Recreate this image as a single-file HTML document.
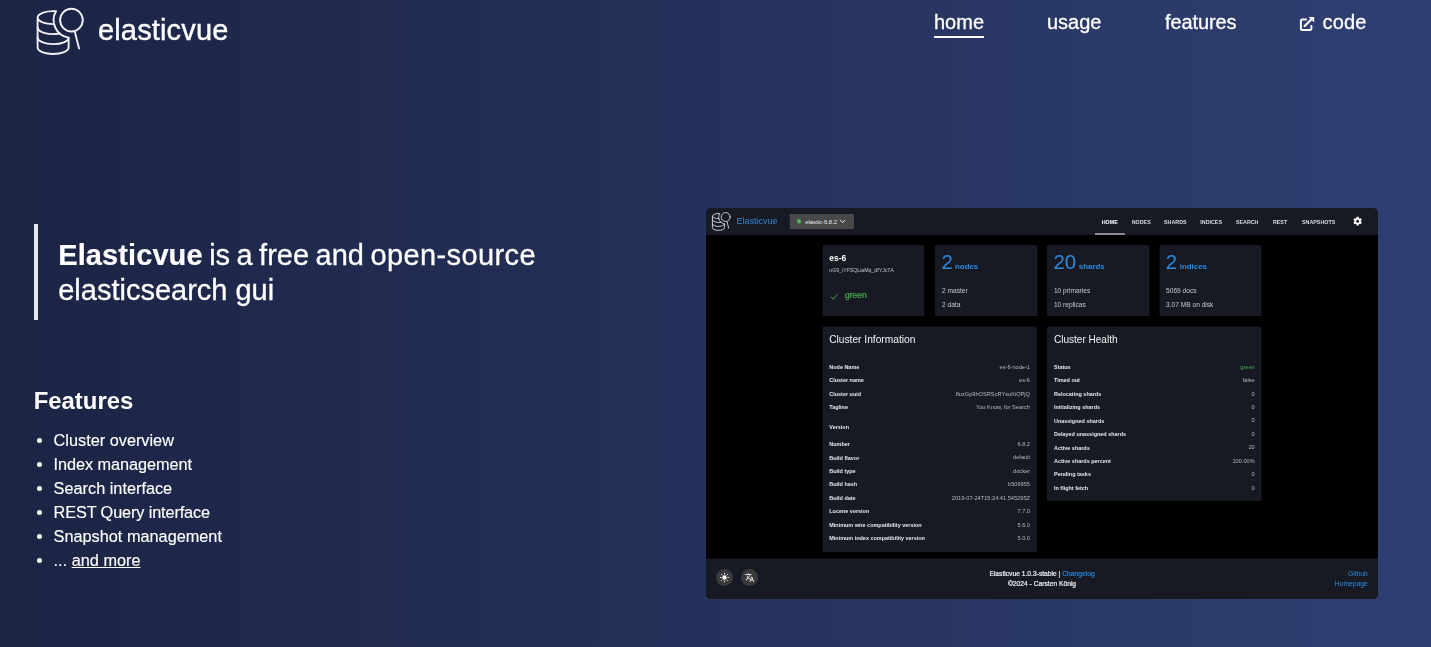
<!DOCTYPE html>
<html lang="en">
<head>
<meta charset="utf-8">
<title>elasticvue</title>
<style>
*{box-sizing:border-box;margin:0;padding:0}
html,body{width:1431px;height:647px;overflow:hidden}
body{font-family:"Liberation Sans",sans-serif;color:#fff;background:linear-gradient(90deg,#1c2444 0%,#2f3f72 100%);position:relative;-webkit-font-smoothing:antialiased}
a{color:inherit}
.abs{position:absolute}
#root{position:absolute;left:0;top:0;width:1431px;height:647px;opacity:.999}
/* ---------- header ---------- */
#logo{left:34px;top:6px;width:52px;height:52px}
#brand{left:98px;top:12px;font-size:29px;line-height:36px;letter-spacing:0.15px;white-space:nowrap;-webkit-text-stroke:0.4px #fff}
nav a{position:absolute;top:9px;font-size:20px;line-height:26px;text-decoration:none;white-space:nowrap;-webkit-text-stroke:0.3px #fff}
nav a.active{border-bottom:2px solid #fff;padding-bottom:1px}
/* ---------- hero ---------- */
#quote{left:34px;top:224px;width:560px;height:96px;border-left:4px solid #e7e8ee;padding:13.5px 0 0 20.2px;font-size:29px;line-height:35.6px;white-space:nowrap;word-spacing:-1.6px;-webkit-text-stroke:0.3px #fff}
#quote b{font-weight:700;letter-spacing:0.1px;-webkit-text-stroke:0.2px #fff}
#feat{left:33.7px;top:386.2px;font-size:23.9px;line-height:30px;font-weight:700}
#list{left:34px;top:428px;list-style:none;font-size:16.3px;line-height:24px}
#list li{position:relative;padding-left:19.6px;white-space:nowrap;-webkit-text-stroke:0.15px #fff}
#list li:before{content:"";position:absolute;left:2.9px;top:9.6px;width:5.4px;height:5.4px;border-radius:50%;background:#fff}
/* ---------- app screenshot ---------- */
#shot{left:706px;top:208px;width:672px;height:391px;border-radius:5.5px;background:#000;overflow:hidden}
#app{position:absolute;left:0;top:0;width:1344px;height:782px;transform:scale(.5);transform-origin:0 0;font-family:"Liberation Sans",sans-serif}
#app .bar{left:0;top:0;width:1344px;height:53.5px;background:#191b24}
#app .foot{left:0;top:700.8px;width:1344px;height:82px;background:#191b24}
#app .card{position:absolute;background:#191b24;border-radius:3px}
#app .t{position:absolute;line-height:1;white-space:nowrap}
</style>
</head>
<body>
<div id="root">

<!-- header -->
<svg id="logo" class="abs" viewBox="0 0 52 52" fill="none" stroke="#f1f2f7" stroke-width="1.9" stroke-linecap="round" stroke-linejoin="round">
  <path d="M3.6 11.6 A15.5 6.5 0 0 1 22 5.22 A17.8 17.8 0 0 0 34.6 31.67 V41.5 A15.5 6.5 0 0 1 3.6 41.5 V11.6 A15.5 6.5 0 0 0 20.08 18.09"/>
  <path d="M3.6 21.6 A15.5 6.5 0 0 0 25.7 27.48"/>
  <path d="M3.6 31.6 A15.5 6.5 0 0 0 34.6 31.67"/>
  <circle cx="37.43" cy="14.1" r="11.35"/>
  <path d="M40.9 26.1 L45.05 42.5"/>
</svg>
<div id="brand" class="abs">elasticvue</div>

<nav>
  <a class="active" style="left:934px">home</a>
  <a style="left:1047px">usage</a>
  <a style="left:1165px;letter-spacing:-0.1px">features</a>
  <a style="left:1322.6px;letter-spacing:0.15px">code</a>
</nav>
<svg class="abs" style="left:1299px;top:16px;width:17px;height:16px" viewBox="0 0 17 16" fill="none" stroke="#fff" stroke-width="2" stroke-linecap="round" stroke-linejoin="round">
  <path d="M7 3.5 H3.4 A1.5 1.5 0 0 0 1.9 5 V12.4 A1.5 1.5 0 0 0 3.4 13.9 H10.9 A1.5 1.5 0 0 0 12.4 12.4 V10"/>
  <path d="M5.7 10 L13 2.7" stroke-width="2.3"/>
  <path d="M9.7 1 H15.2 V6.5 Z" fill="#fff" stroke="none"/>
</svg>

<!-- hero -->
<div id="quote" class="abs"><b>Elasticvue</b> is a free and <span style="letter-spacing:0.4px">open-source</span><br><span style="word-spacing:0;letter-spacing:0">elasticsearch gui</span></div>
<div id="feat" class="abs">Features</div>
<ul id="list" class="abs">
  <li>Cluster overview</li>
  <li style="letter-spacing:-0.07px">Index management</li>
  <li>Search interface</li>
  <li style="letter-spacing:-0.13px">REST Query interface</li>
  <li>Snapshot management</li>
  <li>... <a href="#features" style="text-decoration:underline">and more</a></li>
</ul>

<!-- app screenshot -->
<div id="shot" class="abs">
<div id="app">
  <div class="bar abs"></div>
  <div class="foot abs"></div>
  <svg class="abs" style="left:10.4px;top:7.2px;width:40.8px;height:40.8px" viewBox="0 0 52 52" fill="none" stroke="#d9d9dc" stroke-width="2.3" stroke-linecap="round" stroke-linejoin="round">
<path d="M3.6 11.6 A15.5 6.5 0 0 1 22 5.22 A17.8 17.8 0 0 0 34.6 31.67 V41.5 A15.5 6.5 0 0 1 3.6 41.5 V11.6 A15.5 6.5 0 0 0 20.08 18.09"/>
<path d="M3.6 21.6 A15.5 6.5 0 0 0 25.7 27.48"/><path d="M3.6 31.6 A15.5 6.5 0 0 0 34.6 31.67"/>
<circle cx="37.43" cy="14.1" r="11.35"/><path d="M40.9 26.1 L45.05 42.5"/></svg>
  <div class="t" style="left:60.8px;top:16.96px;font-size:18px;color:#3088d2">Elasticvue</div>
  <div class="abs" style="left:167px;top:12.2px;width:128.6px;height:29.4px;background:#4a4a4b;border-radius:2.4px"></div>
  <div class="abs" style="left:181.6px;top:21.8px;width:8.8px;height:8.8px;background:#4fb653;border-radius:50%"></div>
  <div class="t" style="left:198.4px;top:21.61px;font-size:11.8px;color:#ededed">elastic-6.8.2</div>
  <svg class="abs" style="left:266.6px;top:22.4px;width:12.8px;height:9.6px" viewBox="0 0 6.4 4.8" fill="none" stroke="#f0f0f0" stroke-width="1" stroke-linecap="round" stroke-linejoin="round"><path d="M0.8 1 L3.2 3.6 L5.6 1"/></svg>
  <div class="t" style="left:791.4px;top:22.74px;font-size:10.7px;color:#fff;font-weight:700">HOME</div>
  <div class="t" style="left:851.4px;top:22.74px;font-size:10.7px;color:#dcdcdf;font-weight:700">NODES</div>
  <div class="t" style="left:916px;top:22.74px;font-size:10.7px;color:#dcdcdf;font-weight:700">SHARDS</div>
  <div class="t" style="left:988.6px;top:22.74px;font-size:10.7px;color:#dcdcdf;font-weight:700">INDICES</div>
  <div class="t" style="left:1059.8px;top:22.74px;font-size:10.7px;color:#dcdcdf;font-weight:700">SEARCH</div>
  <div class="t" style="left:1133.8px;top:22.74px;font-size:10.7px;color:#dcdcdf;font-weight:700">REST</div>
  <div class="t" style="left:1192px;top:22.74px;font-size:10.7px;color:#dcdcdf;font-weight:700">SNAPSHOTS</div>
  <div class="abs" style="left:778.2px;top:50.6px;width:59.6px;height:2.8px;background:#fff"></div>
  <svg class="abs" style="left:1293.4px;top:16.2px;width:20.6px;height:20.6px" viewBox="0 0 24 24" fill="#fff"><path d="M12,15.5A3.5,3.5 0 0,1 8.5,12A3.5,3.5 0 0,1 12,8.5A3.5,3.5 0 0,1 15.5,12A3.5,3.5 0 0,1 12,15.5M19.43,12.97C19.47,12.65 19.5,12.33 19.5,12C19.5,11.67 19.47,11.34 19.43,11L21.54,9.37C21.73,9.22 21.78,8.95 21.66,8.73L19.66,5.27C19.54,5.05 19.27,4.96 19.05,5.05L16.56,6.05C16.04,5.66 15.5,5.32 14.87,5.07L14.5,2.42C14.46,2.18 14.25,2 14,2H10C9.75,2 9.54,2.18 9.5,2.42L9.13,5.07C8.5,5.32 7.96,5.66 7.44,6.05L4.95,5.05C4.73,4.96 4.46,5.05 4.34,5.27L2.34,8.73C2.21,8.95 2.27,9.22 2.46,9.37L4.57,11C4.53,11.34 4.5,11.67 4.5,12C4.5,12.33 4.53,12.65 4.57,12.97L2.46,14.63C2.27,14.78 2.21,15.05 2.34,15.27L4.34,18.73C4.46,18.95 4.73,19.03 4.95,18.95L7.44,17.94C7.96,18.34 8.5,18.68 9.13,18.93L9.5,21.58C9.54,21.82 9.75,22 10,22H14C14.25,22 14.46,21.82 14.5,21.58L14.87,18.93C15.5,18.67 16.04,18.34 16.56,17.94L19.05,18.95C19.27,19.03 19.54,18.95 19.66,18.73L21.66,15.27C21.78,15.05 21.73,14.78 21.54,14.63L19.43,12.97Z"/></svg>
  <div class="card" style="left:232.8px;top:74px;width:204.6px;height:141.8px"></div>
  <div class="card" style="left:458.2px;top:74px;width:204.6px;height:141.8px"></div>
  <div class="card" style="left:682.4px;top:74px;width:204.6px;height:141.8px"></div>
  <div class="card" style="left:906.8px;top:74px;width:204.6px;height:141.8px"></div>
  <div class="t" style="left:246.6px;top:92.58px;font-size:16.8px;color:#fff;font-weight:700">es-6</div>
  <div class="t" style="left:246.6px;top:119.6px;font-size:10.4px;color:#c6c6ca">nG9_iYFSQLiaMq_dfYJc7A</div>
  <svg class="abs" style="left:248px;top:169.6px;width:17.2px;height:14.4px" viewBox="0 0 9.5 8" fill="none" stroke="#4caf50" stroke-width="1.0" stroke-linecap="round" stroke-linejoin="round"><path d="M1.2 4.6 L3.6 6.9 L8.3 1.2"/></svg>
  <div class="t" style="left:277.8px;top:166.01px;font-size:17px;color:#4caf50;-webkit-text-stroke:0.4px #4caf50">green</div>
  <div class="t" style="left:471.2px;top:87.46px;font-size:40.8px;color:#2c8ce0">2</div>
  <div class="t" style="left:498px;top:108.63px;font-size:15.8px;color:#2c8ce0;font-weight:700">nodes</div>
  <div class="t" style="left:472px;top:159.23px;font-size:13.2px;color:#c9c9cc">2 master</div>
  <div class="t" style="left:472px;top:186.23px;font-size:13.2px;color:#c9c9cc">2 data</div>
  <div class="t" style="left:695px;top:87.46px;font-size:40.8px;color:#2c8ce0">20</div>
  <div class="t" style="left:745.6px;top:108.63px;font-size:15.8px;color:#2c8ce0;font-weight:700">shards</div>
  <div class="t" style="left:695.8px;top:159.23px;font-size:13.2px;color:#c9c9cc">10 primaries</div>
  <div class="t" style="left:695.8px;top:186.23px;font-size:13.2px;color:#c9c9cc">10 replicas</div>
  <div class="t" style="left:919.4px;top:87.46px;font-size:40.8px;color:#2c8ce0">2</div>
  <div class="t" style="left:947.4px;top:108.63px;font-size:15.8px;color:#2c8ce0;font-weight:700">indices</div>
  <div class="t" style="left:920.2px;top:159.23px;font-size:13.2px;color:#c9c9cc">5069 docs</div>
  <div class="t" style="left:920.2px;top:186.23px;font-size:13.2px;color:#c9c9cc">3.07 MB on disk</div>
  <div class="card" style="left:232.8px;top:237.4px;width:429px;height:450.2px"></div>
  <div class="card" style="left:682.4px;top:237.2px;width:428.6px;height:348.4px"></div>
  <div class="t" style="left:246.4px;top:252.13px;font-size:20.4px;color:#f4f4f6">Cluster Information</div>
  <div class="t" style="left:695.8px;top:252.39px;font-size:20.1px;color:#f4f4f6">Cluster Health</div>
  <div class="t" style="left:246.6px;top:312.17px;font-size:10.9px;color:#e9e9ec;font-weight:700">Node Name</div>
  <div class="t" style="right:696px;top:311.83px;font-size:11.3px;color:#b9b9be">es-6-node-1</div>
  <div class="t" style="left:246.6px;top:338.77px;font-size:10.9px;color:#e9e9ec;font-weight:700">Cluster name</div>
  <div class="t" style="right:696px;top:338.43px;font-size:11.3px;color:#b9b9be">es-6</div>
  <div class="t" style="left:246.6px;top:365.97px;font-size:10.9px;color:#e9e9ec;font-weight:700">Cluster uuid</div>
  <div class="t" style="right:696px;top:365.63px;font-size:11.3px;color:#b9b9be">8uzGp9hOSRScRYsoKiOPjQ</div>
  <div class="t" style="left:246.6px;top:392.77px;font-size:10.9px;color:#e9e9ec;font-weight:700">Tagline</div>
  <div class="t" style="right:696px;top:392.43px;font-size:11.3px;color:#b9b9be">You Know, for Search</div>
  <div class="t" style="left:246.6px;top:433.17px;font-size:10.9px;color:#e9e9ec;font-weight:700">Version</div>
  <div class="t" style="left:246.6px;top:466.77px;font-size:10.9px;color:#e9e9ec;font-weight:700">Number</div>
  <div class="t" style="right:696px;top:466.43px;font-size:11.3px;color:#b9b9be">6.8.2</div>
  <div class="t" style="left:246.6px;top:493.57px;font-size:10.9px;color:#e9e9ec;font-weight:700">Build flavor</div>
  <div class="t" style="right:696px;top:493.23px;font-size:11.3px;color:#b9b9be">default</div>
  <div class="t" style="left:246.6px;top:520.77px;font-size:10.9px;color:#e9e9ec;font-weight:700">Build type</div>
  <div class="t" style="right:696px;top:520.43px;font-size:11.3px;color:#b9b9be">docker</div>
  <div class="t" style="left:246.6px;top:547.37px;font-size:10.9px;color:#e9e9ec;font-weight:700">Build hash</div>
  <div class="t" style="right:696px;top:547.03px;font-size:11.3px;color:#b9b9be">b506955</div>
  <div class="t" style="left:246.6px;top:574.17px;font-size:10.9px;color:#e9e9ec;font-weight:700">Build date</div>
  <div class="t" style="right:696px;top:573.83px;font-size:11.3px;color:#b9b9be">2019-07-24T15:24:41.545295Z</div>
  <div class="t" style="left:246.6px;top:600.77px;font-size:10.9px;color:#e9e9ec;font-weight:700">Lucene version</div>
  <div class="t" style="right:696px;top:600.43px;font-size:11.3px;color:#b9b9be">7.7.0</div>
  <div class="t" style="left:246.6px;top:628.17px;font-size:10.9px;color:#e9e9ec;font-weight:700">Minimum wire compatibility version</div>
  <div class="t" style="right:696px;top:627.83px;font-size:11.3px;color:#b9b9be">5.6.0</div>
  <div class="t" style="left:246.6px;top:654.77px;font-size:10.9px;color:#e9e9ec;font-weight:700">Minimum index compatibility version</div>
  <div class="t" style="right:696px;top:654.43px;font-size:11.3px;color:#b9b9be">5.0.0</div>
  <div class="t" style="left:696px;top:312.17px;font-size:10.9px;color:#e9e9ec;font-weight:700">Status</div>
  <div class="t" style="right:246.6px;top:311.83px;font-size:11.3px;color:#4caf50">green</div>
  <div class="t" style="left:696px;top:339.17px;font-size:10.9px;color:#e9e9ec;font-weight:700">Timed out</div>
  <div class="t" style="right:246.6px;top:338.83px;font-size:11.3px;color:#b9b9be">false</div>
  <div class="t" style="left:696px;top:365.97px;font-size:10.9px;color:#e9e9ec;font-weight:700">Relocating shards</div>
  <div class="t" style="right:246.6px;top:365.63px;font-size:11.3px;color:#b9b9be">0</div>
  <div class="t" style="left:696px;top:392.77px;font-size:10.9px;color:#e9e9ec;font-weight:700">Initializing shards</div>
  <div class="t" style="right:246.6px;top:392.43px;font-size:11.3px;color:#b9b9be">0</div>
  <div class="t" style="left:696px;top:419.77px;font-size:10.9px;color:#e9e9ec;font-weight:700">Unassigned shards</div>
  <div class="t" style="right:246.6px;top:419.43px;font-size:11.3px;color:#b9b9be">0</div>
  <div class="t" style="left:696px;top:446.77px;font-size:10.9px;color:#e9e9ec;font-weight:700">Delayed unassigned shards</div>
  <div class="t" style="right:246.6px;top:446.43px;font-size:11.3px;color:#b9b9be">0</div>
  <div class="t" style="left:696px;top:473.77px;font-size:10.9px;color:#e9e9ec;font-weight:700">Active shards</div>
  <div class="t" style="right:246.6px;top:473.43px;font-size:11.3px;color:#b9b9be">20</div>
  <div class="t" style="left:696px;top:500.37px;font-size:10.9px;color:#e9e9ec;font-weight:700">Active shards percent</div>
  <div class="t" style="right:246.6px;top:500.03px;font-size:11.3px;color:#b9b9be">100.00%</div>
  <div class="t" style="left:696px;top:527.37px;font-size:10.9px;color:#e9e9ec;font-weight:700">Pending tasks</div>
  <div class="t" style="right:246.6px;top:527.03px;font-size:11.3px;color:#b9b9be">0</div>
  <div class="t" style="left:696px;top:554.37px;font-size:10.9px;color:#e9e9ec;font-weight:700">In flight fetch</div>
  <div class="t" style="right:246.6px;top:554.03px;font-size:11.3px;color:#b9b9be">0</div>
  <div class="abs" style="left:20px;top:721.6px;width:34.4px;height:34.4px;background:#3b3b3d;border-radius:50%"></div>
  <div class="abs" style="left:69.6px;top:721.6px;width:34.4px;height:34.4px;background:#3b3b3d;border-radius:50%"></div>
  <svg class="abs" style="left:27.2px;top:728.8px;width:20px;height:20px" viewBox="0 0 24 24" fill="#fff" stroke="#fff" stroke-width="2.2" stroke-linecap="round"><circle cx="12" cy="12" r="5.4" stroke="none"/><path d="M12 1.6V3.6M12 20.4V22.4M1.6 12H3.6M20.4 12H22.4M4.7 4.7L6 6M18 18L19.3 19.3M4.7 19.3L6 18M18 6L19.3 4.7"/></svg>
  <svg class="abs" style="left:76.8px;top:729.2px;width:20px;height:20px" viewBox="0 0 24 24" fill="#fff"><path d="M12.87,15.07L10.33,12.56L10.36,12.53C12.1,10.59 13.34,8.36 14.07,6H17V4H10V2H8V4H1V6H12.17C11.5,7.92 10.44,9.75 9,11.35C8.07,10.32 7.3,9.19 6.69,8H4.69C5.42,9.63 6.42,11.17 7.67,12.56L2.58,17.58L4,19L9,14L12.11,17.11L12.87,15.07M18.5,10H16.5L12,22H14L15.12,19H19.87L21,22H23L18.5,10M15.88,17L17.5,12.67L19.12,17H15.88Z"/></svg>
  <div class="t" style="left:472px;width:400px;text-align:center;top:725.06px;font-size:13.4px;color:#ececee;-webkit-text-stroke:0.45px #ececee">Elasticvue 1.0.3-stable | <span style="color:#2c8ce0;-webkit-text-stroke:0.3px #2c8ce0">Changelog</span></div>
  <div class="t" style="left:472px;width:400px;text-align:center;top:745.46px;font-size:13.4px;color:#ececee;-webkit-text-stroke:0.45px #ececee">©2024 - Carsten König</div>
  <div class="t" style="right:20.4px;top:724.97px;font-size:13.5px;color:#2c8ce0">Github</div>
  <div class="t" style="right:20.4px;top:744.77px;font-size:13.5px;color:#2c8ce0">Homepage</div>
</div>
</div>

</div>
</body>
</html>
